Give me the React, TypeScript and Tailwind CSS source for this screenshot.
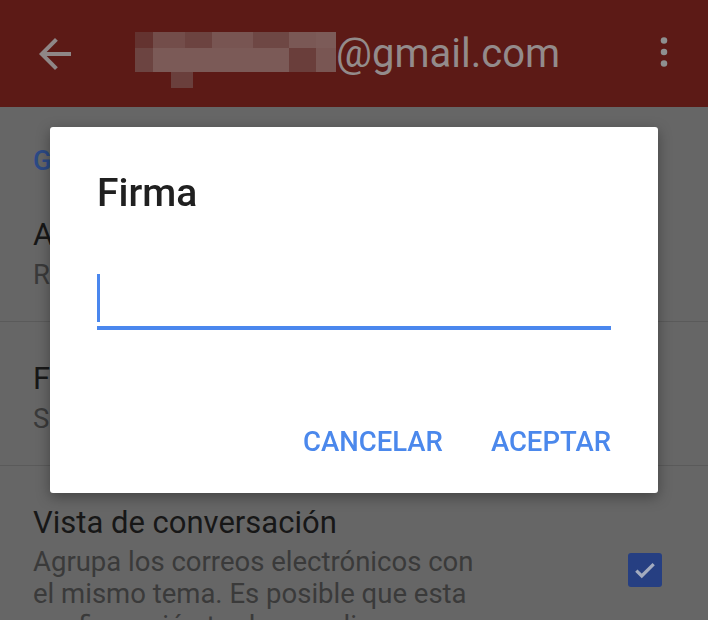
import React from 'react';

const ROBOTO = { fontFamily: 'Roboto, "Noto Sans", sans-serif' };

// pixelated part of the address (censored in the screenshot)
const MOSAIC: [number, number, number, number, string][] = [
  [0, 14, 18, 16, '#643330'],
  [18, 14, 32, 16, '#734d4a'],
  [50, 14, 27, 16, '#6c4340'],
  [77, 14, 41, 16, '#785552'],
  [118, 14, 36, 16, '#6e4744'],
  [154, 14, 27, 16, '#7a5855'],
  [181, 14, 20, 16, '#7c5b58'],
  [0, 30, 18, 24, '#6c4441'],
  [18, 30, 136, 24, '#7b5a57'],
  [154, 30, 27, 24, '#6a3e3b'],
  [181, 30, 20, 24, '#795653'],
  [36, 54, 22, 16, '#6a3f3c'],
];

function Header() {
  return (
    <div className="h-[107px] bg-[#5c1a16] flex items-center relative">
      <svg width="48" height="48" viewBox="0 0 24 24" className="ml-[31px]" fill="#8f8787">
        <path d="M20 11H7.83l5.59-5.59L12 4l-8 8 8 8 1.41-1.41L7.83 13H20v-2z" />
      </svg>
      <svg width="201" height="70" viewBox="0 0 201 70" className="ml-[56px] self-start mt-[18px]">
        {MOSAIC.map(([x, y, w, h, c], i) => (
          <rect key={i} x={x} y={y} width={w} height={h} fill={c} />
        ))}
      </svg>
      <span className="text-[40px] leading-[48px] text-[#938b8b]" style={ROBOTO}>@gmail.com</span>
      <svg width="46" height="46" viewBox="0 0 24 24" className="absolute left-[641px] top-[29px]" fill="#8e9090">
        <circle cx="12" cy="6" r="1.7" />
        <circle cx="12" cy="12" r="1.7" />
        <circle cx="12" cy="18" r="1.7" />
      </svg>
    </div>
  );
}

function Row({ title, sub }: { title: string; sub: string }) {
  return (
    <div className="pl-[33px] pt-[37px] pb-[26px] border-b border-[#5a5a5a]">
      <div className="text-[31px] leading-[40px] text-[#171717]">{title}</div>
      <div className="text-[27.5px] leading-[40px] text-[#3a3a3a]">{sub}</div>
    </div>
  );
}

function Dialog() {
  return (
    <div className="fixed inset-0 flex items-center justify-center">
      <div className="w-[608px] h-[366px] bg-white rounded-[3px] shadow-[0_4px_14px_rgba(0,0,0,0.35)] flex flex-col px-[47px]" style={ROBOTO}>
        <div className="pt-[42px] text-[39px] leading-[48px] font-medium text-[#202020]">Firma</div>
        <div className="mt-[57px] flex flex-col">
          <div className="w-[3px] h-[48px] bg-[#4a87ee]" />
          <div className="mt-[4px] h-[4px] bg-[#4a87ee]" />
        </div>
        <div className="mt-auto pb-[33px] flex justify-end gap-[48px] text-[27.5px] leading-[36px] font-medium text-[#4b88ec]">
          <span>CANCELAR</span>
          <span>ACEPTAR</span>
        </div>
      </div>
    </div>
  );
}

export default function App() {
  return (
    <div className="w-full h-[620px] overflow-hidden bg-[#666666] relative" style={ROBOTO}>
      <Header />
      <div className="h-[71px] pl-[33px] pt-[39px] text-[27px] leading-[30px] font-medium text-[#2c4a86]">General</div>
      <Row title="Acción de respuesta predeterminada" sub="Responder" />
      <Row title="Firma móvil" sub="Sin configurar" />
      <div className="pl-[33px] pr-[46px] pt-[37px] flex items-start">
        <div className="w-[450px]">
          <div className="text-[31px] leading-[40px] text-[#171717]">Vista de conversación</div>
          <div className="mt-[3px] text-[27.5px] leading-[32px] text-[#3a3a3a]">
            Agrupa los correos electrónicos con el mismo tema. Es posible que esta configuración tarde en aplicarse.
          </div>
        </div>
        <div className="ml-auto mt-[50px] w-[34px] h-[34px] rounded-[3px] bg-[#263f82] flex items-center justify-center">
          <svg width="26" height="26" viewBox="0 0 24 24" fill="none" stroke="#a3abbf" strokeWidth="3">
            <path d="M4 12.5l5 5L20 6.5" />
          </svg>
        </div>
      </div>
      <Dialog />
    </div>
  );
}
